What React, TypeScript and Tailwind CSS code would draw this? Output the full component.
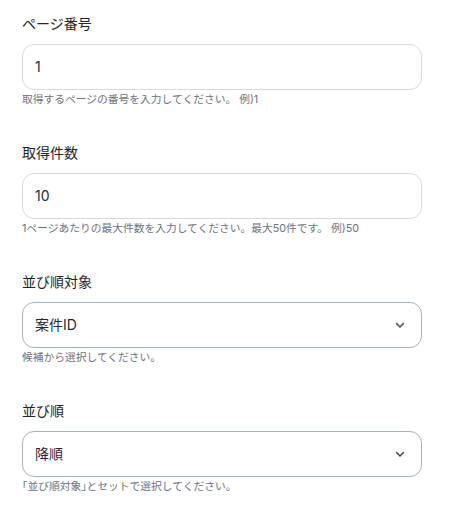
import React from "react";

function Chevron() {
  return (
    <svg width="16" height="16" viewBox="0 0 24 24" fill="none" stroke="#4b5563" strokeWidth="2.5" strokeLinecap="round" strokeLinejoin="round">
      <path d="M7 10l5 5 5-5" />
    </svg>
  );
}

function Field({ label, value, help, select }: { label: string; value: string; help: React.ReactNode; select?: boolean }) {
  return (
    <div className="flex flex-col">
      <div className="h-5 text-sm leading-5 font-normal text-[#1f2329]">{label}</div>
      <div
        className={
          "mt-[10px] h-[46px] w-[400px] rounded-xl bg-white flex items-center justify-between pl-3 pr-[13px] border " +
          (select ? "border-[#a7b0bf]" : "border-[#d5dae2]")
        }
      >
        <span className="text-sm text-[#1f2937]">{value}</span>
        {select ? <Chevron /> : null}
      </div>
      <div className="mt-[2px] h-4 text-[10.75px] leading-4 text-[#6b7280] whitespace-nowrap">{help}</div>
    </div>
  );
}

export default function App() {
  return (
    <div
      className="min-h-[514px] bg-white px-[22px] pt-[14px] flex flex-col gap-[35px]"
      style={{ fontFamily: 'Inter, "Noto Sans CJK JP", sans-serif' }}
    >
      <Field label="ページ番号" value="1" help="取得するページの番号を入力してください。 例)1" />
      <Field label="取得件数" value="10" help="1ページあたりの最大件数を入力してください。最大50件です。 例)50" />
      <Field label="並び順対象" value="案件ID" help="候補から選択してください。" select />
      <Field
        label="並び順"
        value="降順"
        help={
          <>
            <span className="[font-feature-settings:'halt']">「</span>並び順対象<span className="[font-feature-settings:'halt']">」</span>とセットで選択してください。
          </>
        }
        select
      />
    </div>
  );
}
